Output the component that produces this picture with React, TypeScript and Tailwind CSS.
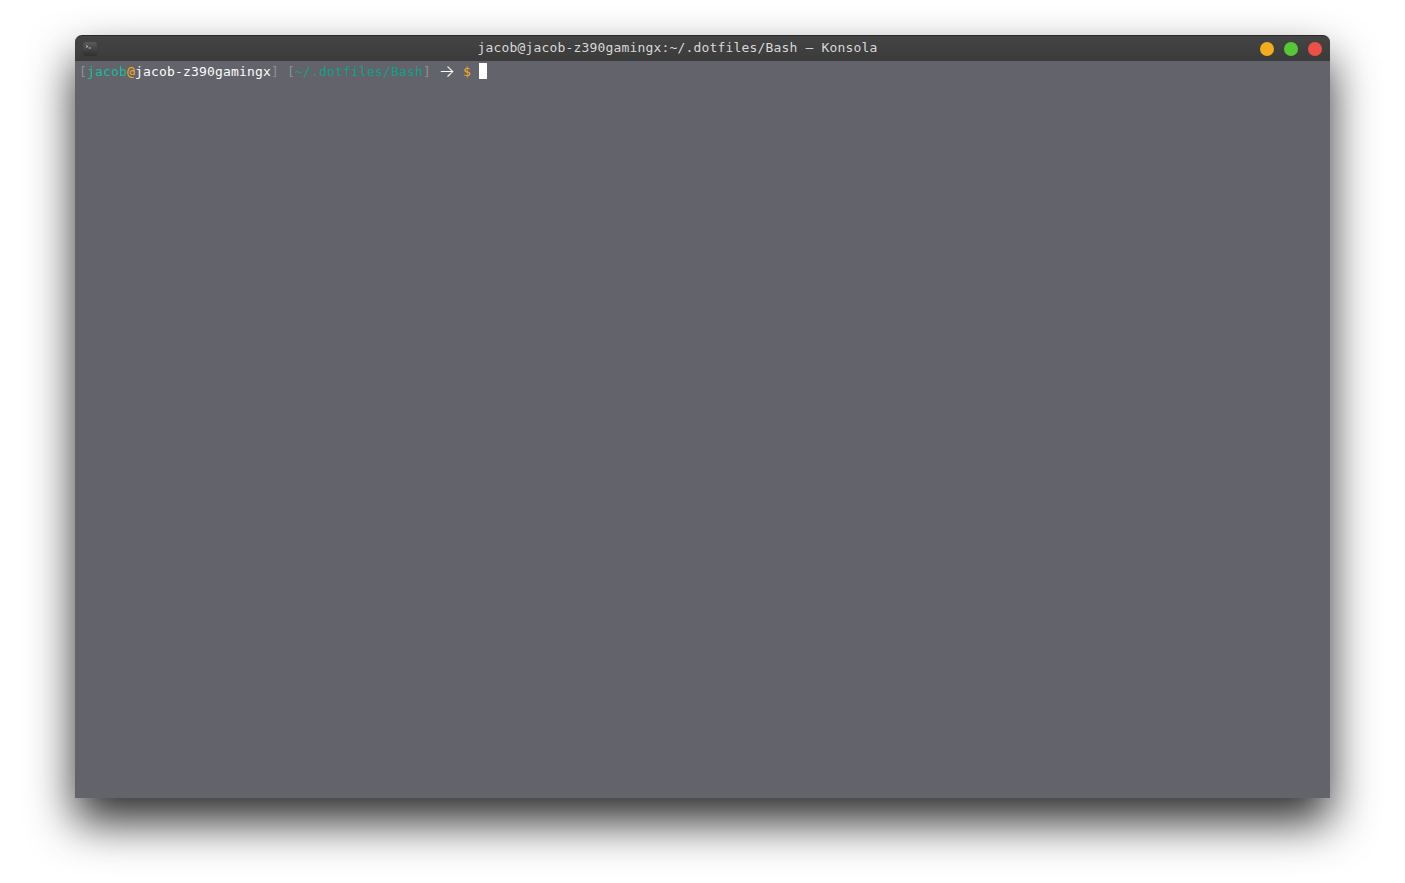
const mono = 'font-["DejaVu_Sans_Mono","Liberation_Mono",monospace] text-[13px] tracking-[0.17px] whitespace-pre';

function Dot({ className }: { className: string }) {
  return <span className={`block w-3.5 h-3.5 rounded-full ${className}`} />;
}

function TerminalIcon() {
  return (
    <div className="w-3.5 h-3.5 rounded-[3px] bg-gradient-to-b from-[#5a5a5a] to-[#2f2f2f] overflow-hidden">
      <svg width="14" height="14" viewBox="0 0 14 14" fill="none">
        <path d="M3 3.5 L5 4.5 L3 5.5" stroke="#cfcfcf" strokeWidth="0.8" />
        <path d="M5.5 6 H8" stroke="#cfcfcf" strokeWidth="0.8" />
      </svg>
    </div>
  );
}

export default function App() {
  return (
    <div className="min-h-[883px] bg-white px-[75px] pt-[35px] overflow-hidden">
      <div className="h-[763px] flex flex-col rounded-t-[7px] shadow-[0_24px_46px_0_rgba(0,0,0,0.82)]">
        {/* title bar */}
        <div className="h-[26px] shrink-0 flex items-center pl-2 pr-2 rounded-t-[7px] border-t border-[#2a2a2a] bg-gradient-to-b from-[#444444] to-[#3b3b3b]">
          <TerminalIcon />
          <div className={`flex-1 text-center -mt-[1px] pr-0.5 text-[#d8d8d8] ${mono}`}>
            jacob@jacob-z390gamingx:~/.dotfiles/Bash — Konsola
          </div>
          <div className="flex items-center gap-2.5 mt-[1px]">
            <Dot className="bg-[#f5ac1c]" />
            <Dot className="bg-[#56c837]" />
            <Dot className="bg-[#ee5047]" />
          </div>
        </div>

        {/* terminal body */}
        <div className="flex-1 bg-[#63636c] pl-1 pt-0.5">
          <div className={`flex items-center h-4 pt-0.5 ${mono}`}>
            <span className="text-[#8a9296]">[</span>
            <span className="text-[#1abc9c]">jacob</span>
            <span className="text-[#f5ac1c]">@</span>
            <span className="text-[#fcfcfc]">jacob-z390gamingx</span>
            <span className="text-[#8a9296]">]</span>
            <span> </span>
            <span className="text-[#8a9296]">[</span>
            <span className="text-[#11a085]">~/.dotfiles/Bash</span>
            <span className="text-[#8a9296]">]</span>
            <span> </span>
            <span className='w-4 -mt-0.5 flex justify-center overflow-visible font-["Inter",sans-serif] font-light text-[#fcfcfc] text-[17px] leading-4 tracking-normal'>→</span>
            <span> </span>
            <span className="text-[#f5ac1c]">$</span>
            <span> </span>
            <span className="w-2 h-4 -mt-0.5 bg-white" />
          </div>
        </div>
      </div>
    </div>
  );
}
